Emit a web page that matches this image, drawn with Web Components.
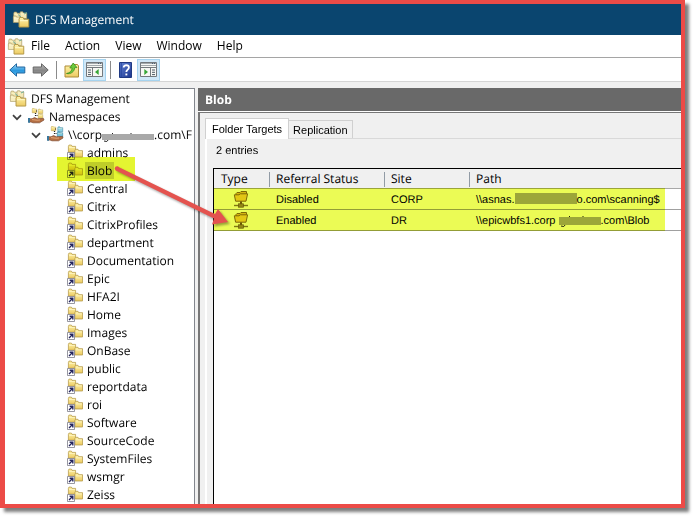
<!DOCTYPE html>
<html lang="en">
<head>
<meta charset="utf-8">
<meta name="viewport" content="width=device-width, initial-scale=1">
<title>DFS Management</title>
<style>
html, body { height: 100%; margin: 0; background: #fff; }
body { box-sizing: border-box; padding: 0 10px 10px 0; overflow: hidden; }
</style>
</head>
<body>
<dfs-window></dfs-window>

<script>
const define = (name, html, setup) => {
  const template = document.createElement('template');
  template.innerHTML = html;
  customElements.define(name, class extends HTMLElement {
    connectedCallback() {
      if (this.shadowRoot) return;
      this.attachShadow({ mode: 'open' }).append(template.content.cloneNode(true));
      if (setup) setup(this, this.shadowRoot);
    }
  });
};

const gold = '<linearGradient id="g" x1="0" y1="0" x2="0" y2="1"><stop stop-color="#fff3a8"/><stop offset="1" stop-color="#ecca62"/></linearGradient>';
const folder = (x, y, s = 1, fill = 'url(#g)', stroke = '#b39746') =>
  `<g transform="translate(${x} ${y}) scale(${s})"><path d="M.5 2.2V9.5H9.5V2.2H5L4.2.6H1.2Z" fill="${fill}" stroke="${stroke}" stroke-width=".9"/><path d="M1.4 3.6H8.6" stroke="#fffbd5" stroke-width=".8"/></g>`;
const hand = '<path d="M1 10.800H4L6.500 9.600 9.500 10.800 15.500 10.400 16 12 11.500 14.800H5L3 14H1Z" fill="#b56f43" stroke="#7d4b30" stroke-width=".7"/><path d="M1 10V14.800" stroke="#39769b" stroke-width="2"/><path d="M4 11.600 9 12.200 12 12" fill="none" stroke="#e2a678"/>';
const links = '<path d="M7.500 5V9M8 3H10M7.500 7.500H10" fill="none" stroke="#222" stroke-width="1.200" stroke-dasharray="1 1"/>';
const pane = (mirror) => `<g ${mirror ? 'transform="translate(17 0) scale(-1 1)"' : ''}><path d="M.5.5H16.5V14.5H.5Z" fill="#f7f7f4" stroke="#74797d"/><path d="M1 1.5H16M1 3.5H16" stroke="#a5aaad"/><path d="M1 5.5H16" stroke="#74797d"/><path d="M6.5 6V14" stroke="#74797d"/><path d="M2 8H5M2 10.3H5M2 12.6H5" stroke="#4d5964"/><path d="M12.7 6.9V13L9 10Z" fill="#36a635"/></g><path d="M12 1.5H13M14 1.5H15" stroke="#4c5f76"/>`;

const icons = {
  app: [18, 17, folder(1.4, .6, .75, '#f3e6b0', '#a99a62') + folder(7.6, .3, .75, '#f4e8b6', '#a99a62') + '<path d="M2 8.5 4 11 3.4 7M12 3 15 1.6M6 3.5 9 6" stroke="#6fae9b" fill="none"/>' + folder(1, 4.6, .72, '#f7edc0', '#a99a62') + folder(6.5, 5.8, 1.08)],
  namespaces: [17, 16, folder(4, 0, .5) + folder(10, .8, .5) + folder(10, 5.500, .5) + links + hand],
  root: [17, 16, folder(4, 0, .5) + folder(10.5, .5, .55, '#8ed0e2', '#2c7d9b') + folder(10, 5.5, .6, '#72c2dc', '#2c7d9b') + links + hand],
  link: [16, 16, folder(1, .6, .8) + folder(7.4, 4.8, .86) + '<path d="M.5 8.5H7.5V15.5H.5Z" fill="#fff" stroke="#7c7c89" stroke-width=".8"/><path d="M2 14 5 11M2.6 10.3H5.8V13.5" fill="none" stroke="#24255e" stroke-width="1.4"/>'],
  target: [16, 17, '<path d="M3 9.5V2.5L4 1.5H7L8 .5H13.5V3" fill="#e7b72b" stroke="#8a6a10"/><path d="M1.3 3.8H6L7.2 2.8H14.6L13 10.2H2.6Z" fill="#f7c93c" stroke="#8a6a10"/><path d="M8 10.5V13.5" stroke="#725505" stroke-width="2"/><path d="M1 14.5H15" stroke="#8b7935" stroke-width="1.4"/><rect x="5.6" y="12.8" width="4.8" height="3.4" fill="#a08a3c" stroke="#6e5914" stroke-width=".7"/>'],
  back: [17, 14, '<linearGradient id="b" x1="0" y1="0" x2="0" y2="1"><stop stop-color="#a6ddf9"/><stop offset=".55" stop-color="#2a97dd"/><stop offset="1" stop-color="#54b9f0"/></linearGradient><path d="M.8 7 7.5.8V4H15.8V10H7.5V13.2Z" fill="url(#b)" stroke="#2267a0" stroke-linejoin="round"/>'],
  forward: [17, 14, '<linearGradient id="f" x1="0" y1="0" x2="0" y2="1"><stop stop-color="#bcbcbc"/><stop offset=".55" stop-color="#858585"/><stop offset="1" stop-color="#a3a3a3"/></linearGradient><path d="M16.2 7 9.5.8V4H1.2V10H9.5V13.2Z" fill="url(#f)" stroke="#666" stroke-linejoin="round"/>'],
  up: [16, 16, '<path d="M1 4H7L8.5 2.5H13.5L14.5 4V15H1Z" fill="url(#g)" stroke="#ad8b37"/><path d="M2.5 11.5C6 11 7.8 9 8.2 6H5.8L9.2 1 13 5.6H10.7C10.5 9.5 7 12.5 2.5 11.5Z" fill="#6ccb3d" stroke="#398f20" stroke-width=".8"/>'],
  paneLeft: [17, 15, pane(false)],
  paneRight: [17, 15, pane(true)],
  help: [13, 16, '<linearGradient id="h" x1="0" y1="0" x2="1" y2="1"><stop stop-color="#6383d4"/><stop offset="1" stop-color="#1a348e"/></linearGradient><path d="M.5.5H12.5V15.5H.5Z" fill="url(#h)" stroke="#203a83"/><path d="M2.2 1V15" stroke="#23439d"/><path d="M4.7 5.4C4.7 2.5 9.9 2.5 9.9 5.5 9.9 7.5 7.3 7.8 7.3 10" fill="none" stroke="#fff" stroke-width="1.8"/><path d="M6.4 11.5H8.3V13.4H6.4Z" fill="#fff"/>'],
  chevron: [10, 7, '<path d="M1 1.2 5 5.2 9 1.2" fill="none" stroke="#404040" stroke-width="1.7"/>']
};

const makeIcon = (name) => {
  const icon = document.createElement('dfs-icon');
  icon.setAttribute('name', name);
  return icon;
};

define('dfs-icon', `<style>:host{display:inline-flex;flex:none}svg{display:block}</style><span></span>`, (host, root) => {
  const [w, h, body] = icons[host.getAttribute('name')];
  root.querySelector('span').innerHTML = `<svg width="${w}" height="${h}" viewBox="0 0 ${w} ${h}" aria-hidden="true"><defs>${gold}</defs>${body}</svg>`;
});

define('redacted-text', `
<style>
:host { display: inline-block; vertical-align: -1px; line-height: 0; }
svg { display: block; overflow: visible; }
</style>
<svg aria-hidden="true"></svg>`, (host, root) => {
  const w = +host.getAttribute('width'), h = +host.getAttribute('height');
  const svg = root.querySelector('svg');
  svg.setAttribute('width', w);
  svg.setAttribute('height', h);
  const marks = host.hasAttribute('marks')
    ? `<path d="M2 ${h + 1}Q5 ${h + 3} 7 ${h - 1}M10.5 -1V2M${Math.round(w * .56)} -1V2" fill="none" stroke="#222"/>` : '';
  svg.innerHTML = marks + `<rect width="${w}" height="${h}" fill="#a9a9a9"/>`;
});

define('title-bar', `
<style>
:host { display: flex; align-items: center; gap: 5px; height: 31px; padding-left: 7px; background: #0a456f; color: #fff; flex: none; }
h1 { margin: 0; font: inherit; }
</style>
<dfs-icon name="app"></dfs-icon><h1><slot></slot></h1>`);

define('menu-bar', `
<style>
:host { display: flex; align-items: center; height: 22px; padding-left: 2px; border-bottom: 1px solid #a5a5a5; background: #fff; flex: none; }
nav { display: flex; gap: 15px; padding-left: 6px; }
button { font: inherit; color: #000; border: 0; padding: 0; background: none; }
</style>
<dfs-icon name="app"></dfs-icon>
<nav aria-label="Menu"><button>File</button><button>Action</button><button>View</button><button>Window</button><button>Help</button></nav>`);

define('tool-button', `
<style>
:host { display: flex; }
button { display: grid; place-items: center; width: 23px; height: 22px; padding: 0; border: 1px solid transparent; background: none; }
:host([pressed]) button { background: #d0e8f8; border-color: #a5d3ef; }
</style>
<button></button>`, (host, root) => {
  const button = root.querySelector('button');
  button.setAttribute('aria-label', host.getAttribute('label'));
  button.append(makeIcon(host.getAttribute('icon')));
});

define('tool-bar', `
<style>
:host { display: flex; align-items: center; height: 23px; padding-left: 1px; background: #fff; border-bottom: 1px solid #d5d5d5; flex: none; }
i { width: 1px; height: 18px; background: #8b8b8b; margin: 0 3px 0 4px; }
</style>
<tool-button icon="back" label="Back"></tool-button><tool-button icon="forward" label="Forward"></tool-button><i></i>
<tool-button icon="up" label="Up one level"></tool-button><tool-button icon="paneLeft" label="Console tree" pressed></tool-button><i></i>
<tool-button icon="help" label="Help"></tool-button><tool-button icon="paneRight" label="Action pane" pressed></tool-button>`);

define('tree-item', `
<style>
:host { display: flex; align-items: center; position: relative; height: 18px; white-space: nowrap; }
:host([level="0"]) { padding-left: 4px; }
:host([level="1"]) { padding-left: 7px; }
:host([level="2"]) { padding-left: 26px; }
:host([level="3"]) { padding-left: 62px; }
.toggle { display: none; flex: none; width: 16px; height: 16px; padding: 0; border: 0; background: none; text-align: left; }
:host([open]) .toggle { display: block; }
.icon { display: flex; flex: none; }
.label { flex: none; padding: 0 2px; margin-left: 2px; line-height: 17px; }
:host([selected]) .label { background: #d6d6d6; }
.marker { display: none; }
:host([selected]) .marker { display: block; position: absolute; left: 52px; width: 78px; top: -4px; bottom: -2px; background: #e4f531; mix-blend-mode: multiply; }
</style>
<button class="toggle" aria-label="Collapse"><dfs-icon name="chevron"></dfs-icon></button>
<span class="icon"></span><span class="label"><slot></slot></span><span class="marker"></span>`, (host, root) => {
  host.setAttribute('role', 'treeitem');
  root.querySelector('.icon').append(makeIcon(host.getAttribute('icon') || 'link'));
});

define('namespace-tree', `
<style>
:host { display: block; overflow: hidden; box-sizing: border-box; background: #fff; border: 1px solid #82868d; border-width: 1px 1px 0 0; }
</style>
<div role="tree" aria-label="Namespaces">
<tree-item level="0" icon="app">DFS Management</tree-item>
<tree-item level="1" icon="namespaces" open>Namespaces</tree-item>
<tree-item level="2" icon="root" open>\\\\corp<redacted-text width="52" height="6" marks></redacted-text>.com\\F</tree-item>
</div>`, (host, root) => {
  const tree = root.querySelector('div');
  for (const name of ['admins', 'Blob', 'Central', 'Citrix', 'CitrixProfiles', 'department', 'Documentation', 'Epic', 'HFA2I', 'Home', 'Images', 'OnBase', 'public', 'reportdata', 'roi', 'Software', 'SourceCode', 'SystemFiles', 'wsmgr', 'Zeiss']) {
    const item = document.createElement('tree-item');
    item.setAttribute('level', '3');
    if (name === 'Blob') item.setAttribute('selected', '');
    item.textContent = name;
    tree.append(item);
  }
});

define('tab-strip', `
<style>
:host { display: flex; align-items: flex-end; height: 20px; border-bottom: 1px solid #d9d9d9; font: 11px "Liberation Sans", Arial, sans-serif; }
button { font: inherit; color: #000; box-sizing: border-box; height: 18px; padding: 0 4px; border: 1px solid #d0d0d0; border-bottom: 0; border-left: 0; background: #f0f0f0; }
button[aria-selected="true"] { height: 21px; margin-bottom: -1px; padding: 0 6px; border-left: 1px solid #d0d0d0; background: #fff; }
</style>
<button role="tab" aria-selected="true">Folder Targets</button><button role="tab" aria-selected="false">Replication</button>`);

define('target-table', `
<style>
:host { display: block; position: relative; background: #fff; border: 1px solid #000; border-width: 1px 0 0 1px; }
table { width: 100%; border-collapse: separate; border-spacing: 0; table-layout: fixed; font: 11px "Liberation Sans", Arial, sans-serif; }
th { box-sizing: border-box; height: 20px; padding: 0 0 0 6px; text-align: left; font: 12px/19px var(--ui-font); background: linear-gradient(90deg, transparent calc(100% - 1px), #919ba5 0) 0 3px / 100% 15px no-repeat #f0f0f0; border-bottom: 1px solid #a8a8a8; }
th:first-child { padding-left: 7px; }
th:last-child { background: #f0f0f0; }
td { box-sizing: border-box; height: 21px; padding: 2px 0 0 6px; border-bottom: 1px solid #a0a0a0; white-space: nowrap; line-height: 18px; }
td:first-child { padding: 0 0 0 19px; }
td dfs-icon { display: flex; }
col:nth-child(1) { width: 56px; } col:nth-child(2) { width: 115px; } col:nth-child(3) { width: 85px; }
.marker { position: absolute; left: 0; right: 16px; top: 19px; height: 43px; background: #ebfb55; mix-blend-mode: multiply; }
</style>
<table>
<colgroup><col><col><col><col></colgroup>
<thead><tr><th>Type</th><th>Referral Status</th><th>Site</th><th>Path</th></tr></thead>
<tbody>
<tr><td><dfs-icon name="target"></dfs-icon></td><td>Disabled</td><td>CORP</td><td>\\\\asnas.<redacted-text width="62" height="11"></redacted-text>o.com\\scanning$</td></tr>
<tr><td><dfs-icon name="target"></dfs-icon></td><td>Enabled</td><td>DR</td><td>\\\\epicwbfs1.corp <redacted-text width="42" height="8" marks></redacted-text>.com\\Blob</td></tr>
</tbody>
</table>
<div class="marker"></div>`);

define('details-pane', `
<style>
:host { display: flex; flex-direction: column; min-width: 0; overflow: hidden; background: #f0f0f0; }
h2 { margin: 0; height: 23px; flex: none; padding-left: 7px; font: bold 12px/23px var(--ui-font); color: #fff; background: #696969; border-bottom: 1px solid #fff; }
section { flex: 1; display: flex; flex-direction: column; min-height: 0; padding: 5px 0 0 5px; border: 1px solid #777; border-width: 1px 0 0 2px; }
.page { flex: 1; display: flex; flex-direction: column; border-left: 2px solid #fff; padding-left: 6px; }
p { margin: 0 0 4px; padding-left: 3px; font: 11px/25px "Liberation Sans", Arial, sans-serif; }
target-table { flex: 1; }
</style>
<h2>Blob</h2>
<section>
<tab-strip role="tablist"></tab-strip>
<div class="page"><p>2 entries</p><target-table></target-table></div>
</section>`);

define('callout-arrow', `
<style>
:host { position: absolute; left: 107px; top: 159px; pointer-events: none; filter: drop-shadow(2px 2px 1px rgba(0,0,0,.35)); }
svg { display: block; }
</style>
<svg width="118" height="66" viewBox="0 0 118 66" aria-hidden="true"><path d="M5.5 3.5 103 51 106 46 116 59 100 61.5 102 55.500 4 7.500Z" fill="#e4534f"/><circle cx="5" cy="5.500" r="2.200" fill="#e4534f"/></svg>`);

define('dfs-window', `
<style>
:host {
  --ui-font: "Open Sans", "Noto Sans", sans-serif;
  display: flex; flex-direction: column; position: relative; box-sizing: border-box; height: 100%;
  border: solid #ec4b47; border-width: 4px 4px 4px 5px; background: #f0f0f0; color: #000;
  font: 12px/16px var(--ui-font); text-rendering: geometricPrecision; box-shadow: 4px 4px 3px rgba(0,0,0,.5);
}
main { flex: 1; min-height: 0; display: grid; grid-template-columns: 190px minmax(0, 1fr); gap: 3px; padding-top: 6px; }
</style>
<title-bar>DFS Management</title-bar>
<menu-bar></menu-bar>
<tool-bar></tool-bar>
<main><namespace-tree></namespace-tree><details-pane></details-pane></main>
<callout-arrow></callout-arrow>`);
</script>
</body>
</html>
